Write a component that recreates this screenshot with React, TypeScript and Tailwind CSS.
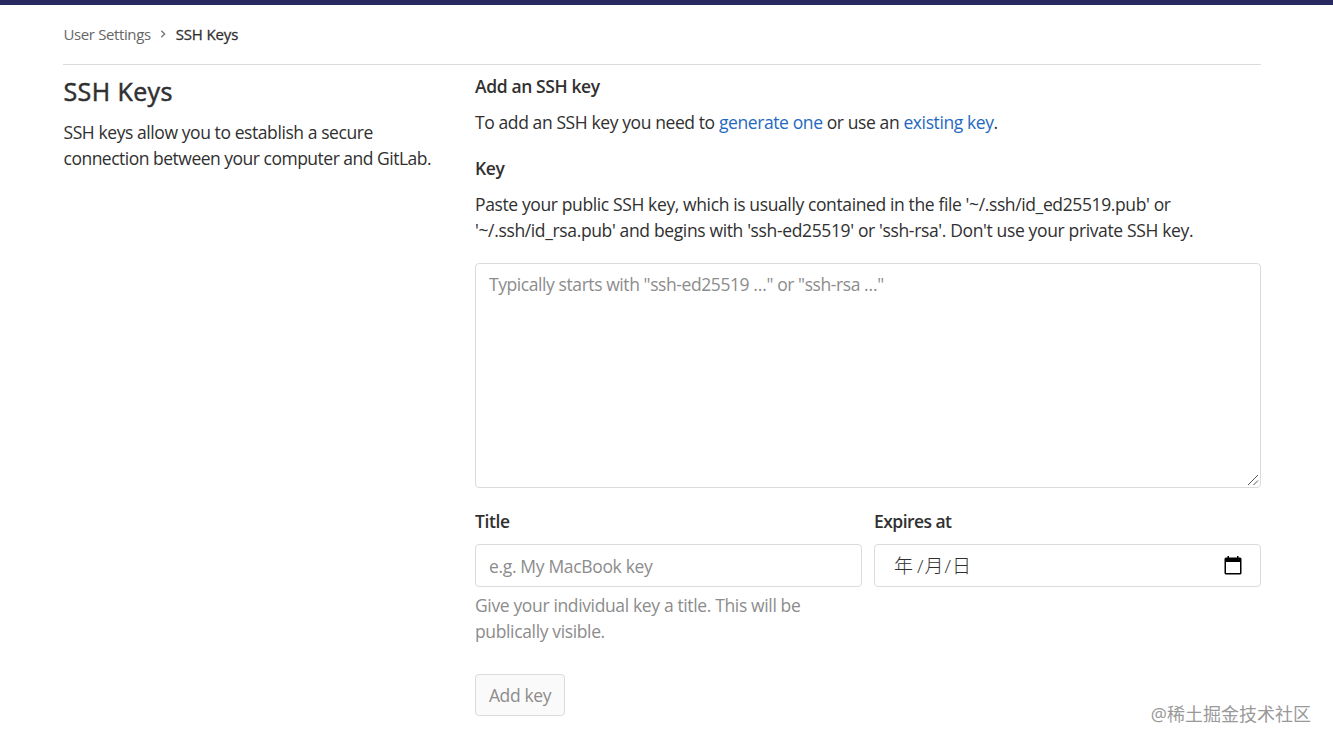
import { useState } from "react";

export default function App() {
  const [publicKey, setPublicKey] = useState("");
  const [title, setTitle] = useState("");

  return (
    <div className="relative h-[746px] w-[1333px] overflow-hidden bg-white font-['Open_Sans','Noto_Sans_CJK_SC',sans-serif] text-[17.5px] leading-[26px] tracking-[-0.38px] text-[#303030]">
      <div className="h-[5px] bg-[#292961]" />

      <div className="ml-[63px] w-[1198px]">
        <nav className="flex h-[60px] items-center border-b border-[#dbdbdb] pb-[2px] pl-[0.5px] text-[15px] tracking-[-0.38px]">
          <a href="#" className="whitespace-nowrap text-[#666]">
            User Settings
          </a>
          <svg
            className="mr-2 ml-[7px] h-[10px] w-[10px]"
            viewBox="0 0 10 10"
            fill="none"
            stroke="#777"
            strokeWidth="1.4"
          >
            <path d="M3.300 1.800L6.600 5L3.300 8.200" />
          </svg>
          <h2 className="tracking-[-0.15px] whitespace-nowrap [-webkit-text-stroke:0.3px_#303030]">
            SSH Keys
          </h2>
        </nav>

        <div className="flex">
          <div className="w-[412px] pt-[9px] pl-[0.5px]">
            <h4 className="text-[25px] leading-[35px] tracking-[0.4px] [-webkit-text-stroke:0.5px_#303030]">
              SSH Keys
            </h4>
            <p className="mt-[10px] whitespace-nowrap">
              <span className="tracking-[-0.42px]">SSH keys allow you to establish a secure</span>
              <br />
              <span className="tracking-[-0.5px]">connection between your computer and GitLab.</span>
            </p>
          </div>

          <div className="w-[786px] pt-2">
            <h5 className="font-semibold">Add an SSH key</h5>
            <p className="mt-[10px] tracking-[-0.4px] whitespace-nowrap">
              To add an SSH key you need to{" "}
              <a href="#" className="text-[#1f69c0]">
                generate one
              </a>{" "}
              or use an{" "}
              <a href="#" className="text-[#1f69c0]">
                existing key
              </a>
              .
            </p>

            <form className="mt-5" onSubmit={(e) => e.preventDefault()}>
              <label htmlFor="key" className="block font-semibold">
                Key
              </label>
              <p className="mt-[10px] whitespace-nowrap">
                Paste your public SSH key, which is usually contained in the file '~/.ssh/id_ed25519.pub' or
                <br />
                <span className="tracking-[-0.36px]">
                  '~/.ssh/id_rsa.pub' and begins with 'ssh-ed25519' or 'ssh-rsa'. Don't use your private SSH key.
                </span>
              </p>
              <div className="relative mt-5">
                <textarea
                  id="key"
                  value={publicKey}
                  onChange={(e) => setPublicKey(e.target.value)}
                  placeholder={'Typically starts with "ssh-ed25519 …" or "ssh-rsa …"'}
                  className="block h-[225px] w-full resize-none rounded border border-[#dbdbdb] px-[13px] py-[7px] tracking-[-0.42px] placeholder:text-[#8c8c8c]"
                />
                <svg
                  className="absolute right-[2px] bottom-[2px] h-3 w-3"
                  viewBox="0 0 12 12"
                  fill="none"
                  stroke="#555"
                >
                  <path d="M1 11L11 1M6.500 11L11 6.500" />
                </svg>
              </div>

              <div className="mt-5 flex gap-3">
                <div className="w-[387px]">
                  <label htmlFor="title" className="block font-semibold">
                    Title
                  </label>
                  <input
                    id="title"
                    type="text"
                    value={title}
                    onChange={(e) => setTitle(e.target.value)}
                    placeholder="e.g. My MacBook key"
                    className="mt-[10px] block h-[43px] w-full rounded border border-[#dbdbdb] px-[13px] tracking-[-0.34px] placeholder:text-[#8c8c8c]"
                  />
                  <p className="mt-[5px] tracking-[-0.36px] whitespace-nowrap text-[#8c8c8c]">
                    Give your individual key a title. This will be
                    <br />
                    publically visible.
                  </p>
                </div>

                <div className="w-[387px]">
                  <label className="block font-semibold tracking-[-0.55px]">
                    Expires at
                  </label>
                  <div className="mt-[10px] flex h-[43px] items-center justify-between rounded border border-[#dbdbdb] pr-[17px] pl-[19px]">
                    <span className="flex text-[19px] font-light tracking-normal">
                      <span className="mr-1">年</span>
                      <span>/</span>
                      <span className="ml-px">月</span>
                      <span className="ml-px">/</span>
                      <span className="ml-px">日</span>
                    </span>
                    <svg className="h-5 w-5" viewBox="0 0 20 20" fill="#000">
                      <path
                        fillRule="evenodd"
                        d="M4.500 0H6V1.500H14V0H15.500V1.500H17Q18.500 1.500 18.500 3V17Q18.500 18.500 17 18.500H3Q1.500 18.500 1.500 17V3Q1.500 1.500 3 1.500H4.500ZM3 6V17H17V6Z"
                      />
                    </svg>
                  </div>
                </div>
              </div>

              <button
                type="submit"
                disabled
                className="mt-[30px] block h-[42px] w-[90px] rounded border border-[#dbdbdb] bg-[#fafafa] text-[#8c8c8c]"
              >
                Add key
              </button>
            </form>
          </div>
        </div>
      </div>

      <div className="absolute top-[701px] right-[22px] text-[18px] leading-[26px] tracking-normal whitespace-nowrap text-[#999]">
        @稀土掘金技术社区
      </div>
    </div>
  );
}
